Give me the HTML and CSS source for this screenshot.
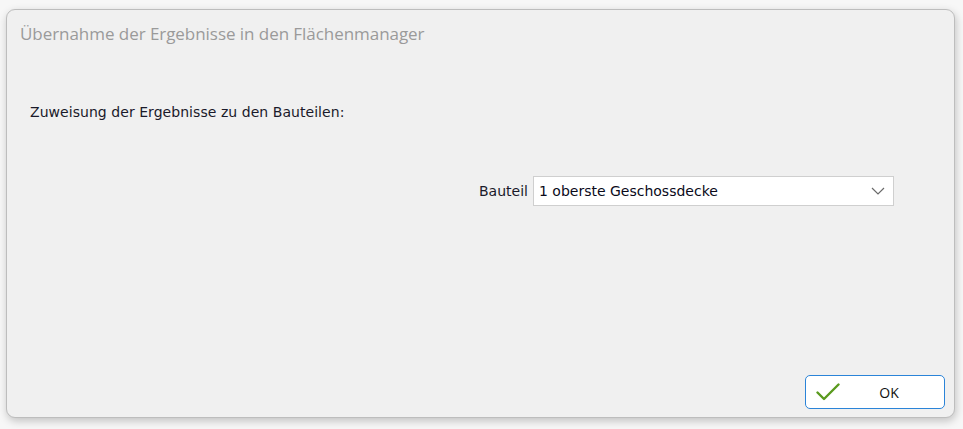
FILE: index.html
```html
<!DOCTYPE html>
<html>
<head>
<meta charset="utf-8">
<link rel="stylesheet" href="styles.css">
</head>
<body>
<div class="window">
  <div class="title">Übernahme der Ergebnisse in den Flächenmanager</div>
  <div class="content">
    <div class="heading">Zuweisung der Ergebnisse zu den Bauteilen:</div>
    <div class="row">
      <span class="label">Bauteil</span>
      <div class="combo">
        <span class="combo-text">1 oberste Geschossdecke</span>
        <svg class="chev" width="14" height="8" viewBox="0 0 14 8"><path d="M1 1 L7 7 L13 1" fill="none" stroke="#6a6a6a" stroke-width="1.2"/></svg>
      </div>
    </div>
  </div>
  <div class="footer">
    <button class="ok">
      <svg class="check" width="24" height="18" viewBox="0 0 24 18"><path d="M1.5 9.5 L8 16 L22.5 1.5" fill="none" stroke="#5a9a1e" stroke-width="2.4" stroke-linecap="round" stroke-linejoin="round"/></svg>
      <span class="ok-text">OK</span>
    </button>
  </div>
</div>
</body>
</html>
```
FILE: styles.css
```css
html, body { margin: 0; padding: 0; }
body {
  width: 963px;
  height: 429px;
  background: #f7f7f7;
  padding: 9px 0 0 6px;
  box-sizing: border-box;
  font-family: "Open Sans", "DejaVu Sans", sans-serif;
}
.window {
  width: 949px;
  height: 409px;
  box-sizing: border-box;
  background: #f0f0f0;
  border: 1px solid #bdbdbd;
  border-radius: 9px;
  box-shadow: 1px 3px 8px rgba(0,0,0,0.22);
  display: flex;
  flex-direction: column;
}
.title {
  padding: 12px 0 0 13px;
  height: 30px;
  font-size: 17px;
  color: #9a9a9a;
  letter-spacing: -0.05px;
}
.content {
  flex: 1;
  display: flex;
  flex-direction: column;
  font-family: "DejaVu Sans", sans-serif;
  font-size: 14px;
  color: #1a1a2a;
}
.heading {
  padding: 52px 0 0 23px;
  letter-spacing: 0.05px;
}
.row {
  display: flex;
  align-items: center;
  margin-top: 56px;
  padding-left: 472px;
  gap: 5px;
}
.label { letter-spacing: 0; }
.combo {
  width: 361px;
  height: 30px;
  box-sizing: border-box;
  background: #fff;
  border: 1px solid #cfcfcf;
  display: flex;
  align-items: center;
  justify-content: space-between;
  padding: 0 8px 0 5px;
}
.combo-text { letter-spacing: 0; color: #0a0a1a; }
.footer {
  display: flex;
  justify-content: flex-end;
  padding: 0 9px 8px 0;
}
.ok {
  width: 140px;
  height: 34px;
  box-sizing: border-box;
  background: #fff;
  border: 1.5px solid #2b84d8;
  border-radius: 5px;
  display: flex;
  align-items: center;
  padding: 0 0 0 10px;
  font-family: "Open Sans", sans-serif;
  font-size: 14px;
  color: #111;
}
.check { flex: none; }
.ok-text { flex: 1; text-align: center; padding-right: 16px; padding-left: 10px; }
```
